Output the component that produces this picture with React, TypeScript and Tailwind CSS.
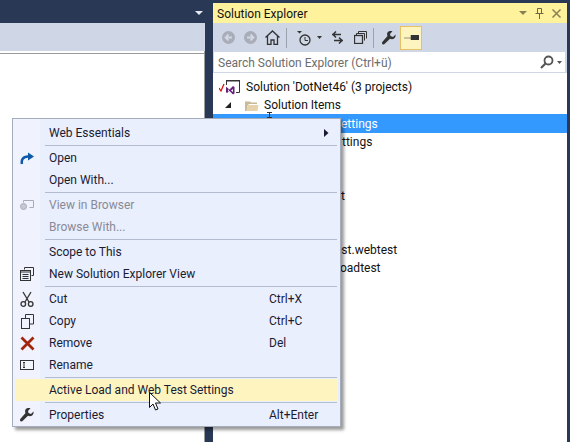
import React from "react";

const Sep = () => <div className="ml-[32px] mr-[3px] h-px bg-[#b4bdcf] my-[1px]" />;

function Row({ label, shortcut, icon, disabled, hi, arrow }: { label: string; shortcut?: string; icon?: React.ReactNode; disabled?: boolean; hi?: boolean; arrow?: boolean }) {
  return (
    <div className={`flex items-center h-[22px] mx-[2px] ${hi ? "bg-[#fdf4bf]" : ""} ${disabled ? "text-[#8a8a96]" : "text-[#1b1b33]"}`}>
      <div className="w-[24px] flex justify-center items-center shrink-0">{icon}</div>
      <div className="w-[10px] shrink-0" />
      <div className="w-[220px] shrink-0 whitespace-nowrap">{label}</div>
      <div className="flex-1 whitespace-nowrap">{shortcut}</div>
      {arrow && (
        <svg width="5" height="8" viewBox="0 0 5 8" className="mr-[9px]"><path d="M0 0l4.500 4L0 8z" fill="#1b1b33" /></svg>
      )}
    </div>
  );
}

const OpenIcon = () => (
  <svg width="15" height="13" viewBox="0 0 15 13"><path d="M2 12C1 8 3 4.500 8 4.500" fill="none" stroke="#0e5aa8" strokeWidth="2.500" /><path d="M8 0.500l6 4-6 4z" fill="#0e5aa8" /></svg>
);
const BrowserIcon = () => (
  <svg width="14" height="12" viewBox="0 0 14 12" fill="none" stroke="#a6acb8"><path d="M3.500 1.500h10v7h-4" /><path d="M3.500 1.500v2" /><circle cx="3.500" cy="7.500" r="3" fill="#c5cad4" /></svg>
);
const NewViewIcon = () => (
  <svg width="14" height="14" viewBox="0 0 14 14" fill="none" stroke="#333"><path d="M4.500 2.500v-2h9v8h-2" /><rect x="0.500" y="3.500" width="10" height="10" fill="#e9eefb" /><path d="M0.500 5h10M2.500 7.500h6M2.500 9.500h6M2.500 11.500h6" /></svg>
);
const CutIcon = () => (
  <svg width="14" height="16" viewBox="0 0 14 16" fill="none" stroke="#333" strokeWidth="1.300"><path d="M3 1l6 10M11 1L5 11" /><circle cx="3.300" cy="13" r="2.300" /><circle cx="10.700" cy="13" r="2.300" /></svg>
);
const CopyIcon = () => (
  <svg width="13" height="15" viewBox="0 0 13 15" fill="none" stroke="#333"><path d="M4.500 4V0.500h8v9.500H9" /><rect x="0.500" y="4.500" width="8" height="10" /></svg>
);
const XIcon = () => (
  <svg width="15" height="15" viewBox="0 0 15 15"><path d="M1.500 1.500l12 12M13.500 1.500l-12 12" stroke="#a1260d" strokeWidth="2.800" fill="none" /></svg>
);
const RenameIcon = () => (
  <svg width="14" height="10" viewBox="0 0 14 10"><rect x="0.500" y="0.500" width="13" height="9" fill="#f4f6fb" stroke="#333" /><path d="M3 2.500h2M3 7.500h2M4 2.500v5" stroke="#333" fill="none" /></svg>
);
const Wrench = ({ size = 14, color = "#333" }: { size?: number; color?: string }) => (
  <svg width={size} height={size} viewBox="0 0 14 14"><path d="M13.500 3.500 11 6 8.500 5 8 3l2.500-2.700C8.500-.3 6-.0 5.300 2c-.4 1.200-.2 2.300.2 3L.7 10.500c-.9 1-.9 1.800-.3 2.400.6.700 1.500.7 2.400-.2L8 7.800c2.800 1.300 6.200-.8 5.500-4.300z" fill={color} /></svg>
);

const Round = ({ d }: { d: string }) => (
  <svg width="13" height="13" viewBox="0 0 13 13"><circle cx="6.500" cy="6.500" r="6.500" fill="#a8adb8" /><path d={d} stroke="#d0d7e5" strokeWidth="1.800" fill="none" /></svg>
);

function Toolbar() {
  return (
    <div className="h-[29px] bg-[#cfd6e5] flex items-center pl-[9px] text-[#333]">
      <Round d="M10 6.500H4M6.500 3.500l-3 3 3 3" />
      <div className="w-[9px]" />
      <Round d="M3 6.500h6M6.500 3.500l3 3-3 3" />
      <div className="w-[8px]" />
      <svg width="15" height="15" viewBox="0 0 15 15" fill="none" stroke="#333" strokeWidth="1.300"><path d="M0.500 7.500 7.500 1l7 6.500M2.500 6v8.500h3.500V10h3v4.500h3.500V6" /></svg>
      <div className="w-px h-[20px] bg-[#9aa2b0] ml-[6px] mr-[9px]" />
      <svg width="15" height="16" viewBox="0 0 15 16" fill="none" stroke="#333"><path d="M1 1h5L3.500 3.500z" fill="#333" stroke="none" /><circle cx="9" cy="10" r="5" strokeWidth="1.300" /><path d="M9 7v3.500h3" /></svg>
      <svg width="5" height="3" viewBox="0 0 5 3" className="ml-[6px] mr-[9px]"><path d="M0 0h5L2.500 3z" fill="#333" /></svg>
      <svg width="13" height="13" viewBox="0 0 13 13" fill="none" stroke="#333" strokeWidth="1.500"><path d="M1 3.500h9M5 0.500l-3 3 3 3M12 9.500H3M8 6.500l3 3-3 3" /></svg>
      <div className="w-[10px]" />
      <svg width="13" height="13" viewBox="0 0 13 13" fill="none" stroke="#333"><path d="M4.500 2.500v-2h8v7" /><path d="M2.500 4.500v-2h8v7" /><rect x="0.500" y="4.500" width="8" height="8" fill="#cfd6e5" strokeWidth="1.300" /></svg>
      <div className="w-px h-[20px] bg-[#9aa2b0] ml-[6px] mr-[8px]" />
      <Wrench />
      <div className="w-[22px] h-[24px] ml-[4px] bg-[#fdf4bf] border border-[#e5c365] flex items-center justify-center">
        <svg width="15" height="5" viewBox="0 0 15 5"><path d="M0 3h7M7 0h8v5H7z" fill="#333" stroke="#333" strokeWidth="0.500" /></svg>
      </div>
    </div>
  );
}

export default function App() {
  return (
    <div className="relative w-[570px] h-[442px] overflow-hidden bg-[#293955] flex text-[12px] leading-[16px]" style={{ fontFamily: 'Roboto, "Noto Sans", sans-serif' }}>
      <div className="w-[205px] shrink-0 flex flex-col pt-[23px] relative">
        <svg width="8" height="4" viewBox="0 0 8 4" className="absolute left-[195px] top-[11px]"><path d="M0 0h8L4 4z" fill="#e6e9f0" /></svg>
        <div className="h-[28px] bg-[#cfd6e5]" />
        <div className="flex-1 bg-white pt-[2px] border-r border-[#9b9b9b]">
          <div className="h-px bg-[#9b9b9b]" />
        </div>
      </div>
      <div className="w-[8px] shrink-0" />
      <div className="flex-1 flex flex-col mt-[3px] mr-[3px]">
        <div className="h-[20px] bg-[#fff29d] flex items-center pl-[4px] pr-[6px] text-[#111]">
          <span className="flex-1 pt-[2px]">Solution Explorer</span>
          <svg width="8" height="4" viewBox="0 0 8 4" className="mr-[8px]"><path d="M0 0h8L4 4z" fill="#8a7f55" /></svg>
          <svg width="9" height="11" viewBox="0 0 9 11" className="mr-[8px]" fill="none" stroke="#6d6648"><path d="M2.500 0.500h4v5h-4zM0.500 5.500h8M4.500 6v5" /></svg>
          <svg width="9" height="9" viewBox="0 0 9 9"><path d="M0.500 0.500l8 8M8.500 0.500l-8 8" stroke="#8a7f55" strokeWidth="1.500" /></svg>
        </div>
        <Toolbar />
        <div className="h-[21px] bg-[#cfd6e5] pl-[1px] pr-[2px]">
          <div className="h-[20px] bg-white flex items-center pl-[4px] pr-[3px] text-[#6d6d6d]">
            <span className="flex-1 pt-[2px]">Search Solution Explorer (Ctrl+ü)</span>
            <svg width="14" height="14" viewBox="0 0 14 14" fill="none" stroke="#555" strokeWidth="1.800"><circle cx="8.500" cy="5.500" r="4" /><path d="M5.500 8.500l-4.500 4.500" strokeWidth="2.200" /></svg>
            <svg width="5" height="3" viewBox="0 0 5 3" className="ml-[3px]"><path d="M0 0h5L2.500 3z" fill="#555" /></svg>
          </div>
        </div>
        <div className="flex-1 bg-white pt-[5px] text-[#111] flex flex-col">
          <div className="h-[18px] flex items-center pl-[6px]">
            <svg width="22" height="16" viewBox="0 0 22 16" className="shrink-0 mr-[5px]">
              <path d="M0 9l2 3 3-7" stroke="#d11" strokeWidth="1.300" fill="none" />
              <path d="M7.500 6V1.500h13v12H17" stroke="#333" fill="none" />
              <path d="M7 1h14v1.500H7z" fill="#333" />
              <path d="M8 8.500l2.500 2 3.500-3.500 1.500 1v6.500l-1.500 1-3.500-3.500-2.500 2-1-.8v-5.400zM9 10v3l1-1.500zM14 10l-2 1.500 2 1.500z" fill="#68217a" fillRule="evenodd" />
            </svg>
            <span>Solution 'DotNet46' (3 projects)</span>
          </div>
          <div className="h-[18px] flex items-center pl-[12px]">
            <svg width="6" height="6" viewBox="0 0 6 6" className="mr-[14px]"><path d="M6 0v6H0z" fill="#222" /></svg>
            <svg width="14" height="11" viewBox="0 0 14 11" className="mr-[5px]">
              <path d="M0 11V1.500h5l1 1h6V4H4L2.500 5.500v5.500z" fill="#c9b998" />
              <path d="M1 11l2-6h10.500l-1 6z" fill="#e6d3ad" />
            </svg>
            <span>Solution Items</span>
          </div>
          <div className="h-[19px] bg-[#3399ff] text-white flex items-center pl-[128px] relative">
            ettings
            <svg width="5" height="6" viewBox="0 0 5 6" className="absolute left-[54px] -top-[2px]"><path d="M0 0.500h5M0 5.500h5M2.500 0.500v5" stroke="#333" fill="none" /></svg>
          </div>
          <div className="h-[18px] flex items-center pl-[129px]">ttings</div>
          <div className="h-[18px]" />
          <div className="h-[18px]" />
          <div className="h-[18px] flex items-center pl-[128px]">t</div>
          <div className="h-[18px]" />
          <div className="h-[18px]" />
          <div className="h-[18px] flex items-center pl-[122px]">est.webtest</div>
          <div className="h-[18px] flex items-center pl-[127px]">oadtest</div>
        </div>
      </div>

      <div className="absolute left-[12px] top-[118px] w-[329px] h-[309px] bg-[#e9effd] border border-[#a5adbd] shadow-[3px_3px_3px_rgba(0,0,0,0.4)] pt-[3px]">
        <div className="absolute left-0 top-0 bottom-0 w-[27px] bg-[#f0f3fd]" />
        <div className="relative">
          <Row label="Web Essentials" arrow />
          <Sep />
          <Row label="Open" icon={<OpenIcon />} />
          <Row label="Open With..." />
          <Sep />
          <Row label="View in Browser" icon={<BrowserIcon />} disabled />
          <Row label="Browse With..." disabled />
          <Sep />
          <Row label="Scope to This" />
          <Row label="New Solution Explorer View" icon={<NewViewIcon />} />
          <Sep />
          <Row label="Cut" shortcut="Ctrl+X" icon={<CutIcon />} />
          <Row label="Copy" shortcut="Ctrl+C" icon={<CopyIcon />} />
          <Row label="Remove" shortcut="Del" icon={<XIcon />} />
          <Row label="Rename" icon={<RenameIcon />} />
          <Sep />
          <Row label="Active Load and Web Test Settings" hi />
          <Sep />
          <Row label="Properties" shortcut="Alt+Enter" icon={<Wrench />} />
        </div>
      </div>

      <svg width="16" height="21" viewBox="0 0 16 21" className="absolute left-[149px] top-[392px]"><path d="M0.500 0.500v15l3.500-3.500 2.500 6 2.500-1-2.500-6h5z" fill="#fff" stroke="#111" /></svg>
    </div>
  );
}
